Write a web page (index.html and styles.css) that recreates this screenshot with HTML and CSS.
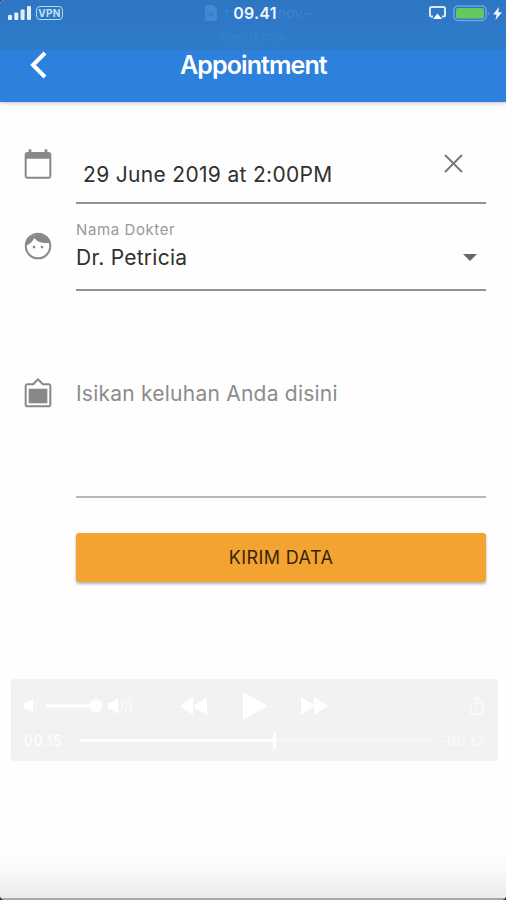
FILE: index.html
```html
<!DOCTYPE html>
<html lang="id">
<head>
<meta charset="utf-8">
<title>Appointment</title>
<link rel="stylesheet" href="styles.css">
</head>
<body>
<div class="screen">
  <header class="header">
    <div class="ghost">
      <div class="ghost-title"><svg width="12" height="16" viewBox="0 0 12 16"><path d="M0 0h8l4 4v12H0z" fill="#4489d0"/><circle cx="6" cy="9" r="2.500" fill="#3b7fc9"/></svg><span class="ghost-start">r</span><span class="ghost-end">nov –</span></div>
      <div class="ghost-sub">menu1.mov</div>
    </div>
    <div class="status">
      <div class="status-left">
        <svg width="24" height="14" viewBox="0 0 24 14" fill="#e4effa"><rect x="0" y="9" width="4" height="5" rx="1"/><rect x="6.300" y="6.500" width="4" height="7.500" rx="1"/><rect x="12.600" y="3.500" width="4" height="10.500" rx="1"/><rect x="19" y="0" width="4" height="14" rx="1"/></svg>
        <span class="vpn">VPN</span>
      </div>
      <div class="time">09.41</div>
      <div class="status-right">
        <svg width="17" height="14" viewBox="0 0 17 14"><path d="M4 10.500H2.500a1.500 1.500 0 0 1-1.500-1.500V2.500A1.500 1.500 0 0 1 2.500 1h12A1.500 1.500 0 0 1 16 2.500V9a1.500 1.500 0 0 1-1.500 1.500H13" fill="none" stroke="#dceaf8" stroke-width="2"/><path d="M8.500 7.500 13 13H4z" fill="#fff"/></svg>
        <svg width="38" height="17" viewBox="0 0 38 17"><rect x="1" y="1" width="32" height="14.500" rx="4" fill="none" stroke="#6ea5dc" stroke-width="1.500"/><rect x="3" y="3" width="28" height="10.500" rx="1.500" fill="#62c960"/><path d="M34.800 6q2 2.200 0 4.500z" fill="#6ea5dc"/></svg>
        <svg width="9" height="13" viewBox="0 0 9 13"><path d="M6 0 0 7.500h3.500L2.500 13 9 5.300H5.300z" fill="#eef5fc"/></svg>
      </div>
    </div>
    <div class="nav">
      <svg class="back" width="18" height="28" viewBox="0 0 18 28"><path d="M16 2 4 14 16 26" fill="none" stroke="#fff" stroke-width="4"/></svg>
      <h1>Appointment</h1>
    </div>
  </header>

  <main class="form">
    <div class="row row-date">
      <svg class="icon" viewBox="0 0 24 24"><path d="M20 3h-1V1h-2v2H7V1H5v2H4c-1.100 0-2 .9-2 2v16c0 1.100.9 2 2 2h16c1.100 0 2-.9 2-2V5c0-1.100-.9-2-2-2zm.5 18.500h-17V8h17v13.500z"/></svg>
      <div class="field">
        <span class="date">29 June 2019 at 2:00PM</span>
        <svg class="clear" width="19" height="19" viewBox="0 0 19 19"><path d="M1 1 18 18M18 1 1 18" stroke="#777" stroke-width="1.800"/></svg>
      </div>
    </div>
    <div class="row row-doctor">
      <svg class="icon" viewBox="0 0 24 24"><circle cx="12" cy="12" r="9.200" fill="none" stroke="#888" stroke-width="1.500"/><path d="M2.700 12C5.800 10.800 8 8.700 9.200 6 11.500 9 15.500 10.500 21 9.500A9.500 9.500 0 0 0 2.700 12z"/><circle cx="9" cy="12.800" r="1"/><circle cx="15" cy="12.800" r="1"/></svg>
      <div class="field">
        <div class="stack">
          <label>Nama Dokter</label>
          <span class="doctor">Dr. Petricia</span>
        </div>
        <svg class="caret" width="14" height="7" viewBox="0 0 14 7"><path d="M0 0h14L7 7z" fill="#666"/></svg>
      </div>
    </div>
    <div class="row row-note">
      <svg class="icon" viewBox="0 0 24 24"><path d="M20 4h-4l-4-4-4 4H4c-1.100 0-2 .9-2 2v14c0 1.100.9 2 2 2h16c1.100 0 2-.9 2-2V6c0-1.100-.9-2-2-2zm.5 16.500h-17v-15h5.200L12 2l3.300 3.500h5.200v15zM19 8H5v11h14z"/></svg>
      <div class="field"><span class="hint">Isikan keluhan Anda disini</span></div>
    </div>
    <button class="submit">KIRIM DATA</button>
  </main>

  <section class="player">
    <div class="controls">
      <svg class="volume" width="112" height="20" viewBox="0 0 112 20"><g fill="#fff"><path d="M0 7h3l6-4v14l-6-4H0z"/><rect x="22" y="8.500" width="48" height="3"/><circle cx="72" cy="10" r="6.500"/><path d="M84 7h3l7-5v16l-7-5h-3z"/></g><path d="M12 7v6M97 6q3 4 0 8M101 3.500q4 6.500 0 13M105 1q4 9 0 18" fill="none" stroke="#f9f9f9" stroke-width="1.500"/></svg>
      <svg class="rewind" width="27" height="18" viewBox="0 0 27 18"><path d="M13 0v18L0 9zM27 0v18L13 9z" fill="#fff"/></svg>
      <svg class="play" width="25" height="28" viewBox="0 0 25 28"><path d="M0 0 25 14 0 28z" fill="#fff"/></svg>
      <svg class="forward" width="27" height="18" viewBox="0 0 27 18"><path d="M0 0v18l14-9zM13 0v18l14-9z" fill="#fff"/></svg>
      <svg class="share" width="15" height="20" viewBox="0 0 15 20"><path d="M5 7H1v11h12V7H9M7 12V1M3.500 4.500 7 1l3.500 3.500" fill="none" stroke="#fafafa" stroke-width="1.500"/></svg>
    </div>
    <div class="timeline">
      <span class="elapsed">00.15</span>
      <div class="track"><div class="played"></div><div class="knob"></div><div class="rest"></div></div>
      <span class="remaining">-00.12</span>
    </div>
  </section>
  <footer class="bottom-shade"></footer>
</div>
</body>
</html>
```
FILE: styles.css
```css
* { box-sizing: border-box; }
body { margin: 0; background: #333; font-family: Inter, "Liberation Sans", sans-serif; }
svg { display: block; flex: none; }
.screen { width: 506px; height: 900px; display: flex; flex-direction: column; background: #fefefe; border-radius: 4px 0 5px 5px; overflow: hidden; }

.header { position: relative; height: 102px; flex: none; background: linear-gradient(#2d76c4 0, #2f7bca 50px, #2d81dc 50px); box-shadow: 0 1px 4px rgba(70, 50, 40, .3); }
.ghost { position: absolute; top: 4px; left: 205px; color: #3f83cd; }
.ghost-title { display: flex; align-items: center; font-size: 14px; line-height: 17px; }
.ghost-start { margin-left: 8px; width: 7px; }
.ghost-end { margin-left: 46px; }
.ghost-sub { margin: 8px 0 0 15px; font-size: 12px; line-height: 16px; letter-spacing: .2px; color: #3a81cd; }
.status { position: relative; display: grid; grid-template-columns: 1fr auto 1fr; align-items: center; height: 26px; padding: 0 4px 0 8px; }
.status-left, .status-right { display: flex; align-items: center; }
.status-left { gap: 4px; }
.status-right { justify-content: flex-end; gap: 7px; }
.status-right svg:last-child { margin-left: -5px; }
.vpn { width: 27px; height: 14px; border: 1.5px solid #b4d8ec; border-radius: 4px; color: #c5e2f2; font-size: 10px; font-weight: 700; line-height: 12px; text-align: center; letter-spacing: .3px; }
.time { color: #eef5fc; font-size: 16px; font-weight: 600; letter-spacing: .2px; }
.nav { position: relative; display: flex; align-items: center; height: 50px; margin-top: 14px; padding-left: 29px; }
.nav h1 { margin: 0 0 0 133px; color: #fff; font-size: 25px; font-weight: 600; letter-spacing: -.9px; line-height: 32px; }

.form { display: flex; flex-direction: column; padding: 0 20px 0 22px; }
.row { display: flex; }
.icon { width: 32px; height: 32px; fill: #888; }
.field { display: flex; flex: 1; margin-left: 22px; border-bottom: 2px solid #929292; }
.row-date { height: 102px; }
.row-date .icon { margin-top: 46px; }
.date { flex: 1; margin: 59px 0 0 7px; font-size: 21px; line-height: 28px; letter-spacing: .32px; color: #303030; }
.clear { margin: 52px 23px 0 0; }
.row-doctor { height: 87px; }
.row-doctor .icon { margin-top: 26px; }
.stack { display: flex; flex: 1; flex-direction: column; }
label { margin-top: 16px; font-size: 15px; line-height: 20px; letter-spacing: .6px; color: #999; }
.doctor { margin-top: 5px; font-size: 21px; line-height: 26px; letter-spacing: .25px; color: #303030; }
.caret { margin: 50px 9px 0 0; }
.row-note { height: 207px; }
.row-note .icon { margin-top: 87px; }
.row-note .field { border-color: #b8b8b8; }
.hint { margin-top: 89px; font-size: 21px; line-height: 28px; letter-spacing: .23px; color: #8c8c8c; }
.submit { height: 49px; margin: 35px 0 0 54px; padding: 0; border: 0; border-radius: 3px; background: #f2a332; box-shadow: 0 2px 3px rgba(0, 0, 0, .3); color: #3a2408; font-family: inherit; font-size: 18px; font-weight: 400; letter-spacing: .4px; }

.player { height: 82px; margin: 97px 8px 0 11px; padding: 13px 13px 0; border-radius: 3px; background: #f2f2f2; color: #fff; }
.controls { display: flex; align-items: center; height: 28px; }
.rewind { margin-left: 44px; }
.play { margin-left: 36px; }
.forward { margin-left: 33px; }
.share { margin-left: auto; }
.timeline { display: flex; align-items: center; height: 22px; margin-top: 9px; font-size: 14px; }
.elapsed { width: 56px; letter-spacing: .8px; }
.track { display: flex; align-items: center; width: 353px; }
.played { width: 193px; height: 3px; background: #fff; }
.knob { width: 3px; height: 17px; background: #fff; }
.rest { flex: 1; height: 6px; background: #f5f5f5; }
.remaining { margin-left: auto; letter-spacing: .7px; color: #fbfbfb; }
.bottom-shade { height: 50px; margin-top: auto; border-bottom: 2px solid #aaa8a5; background: linear-gradient(#fefefe, #fafafa 40%, #ececec); }
```
